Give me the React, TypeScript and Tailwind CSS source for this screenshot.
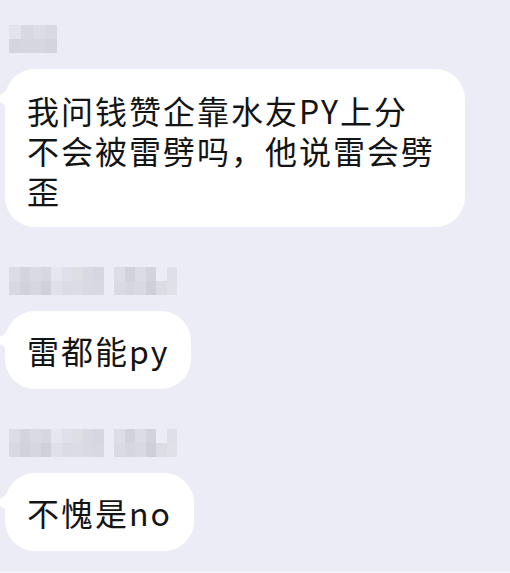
const nameShort = [
  "bg-[#e3e3ec]", "bg-[#d7d9e1]", "bg-[#dcdde4]", "bg-[#d9d9e3]",
  "bg-[#d5d5df]", "bg-[#d5d6df]", "bg-[#d6d6df]", "bg-[#d4d4de]",
];

const nameLongA = [
  "bg-[#dcdde4]", "bg-[#d3d4dd]", "bg-[#dadbe2]", "bg-[#d7d8df]", "bg-[#e6e6ef]", "bg-[#e0e0ea]", "bg-[#dddfe5]", "bg-[#d9d9e3]", "bg-[#d6d6e0]",
  "bg-[#d8d8e1]", "bg-[#d2d2dc]", "bg-[#d5d6df]", "bg-[#cfd0d9]", "bg-[#e0e1e8]", "bg-[#dbdce3]", "bg-[#dcdce5]", "bg-[#d8d9e1]", "bg-[#d7d8e1]",
];

const nameLongB = [
  "bg-[#dddde6]", "bg-[#d1d2db]", "bg-[#dcdce5]", "bg-[#d3d3dd]", "bg-transparent", "bg-[#dfdfe7]",
  "bg-[#dadae3]", "bg-[#d6d6df]", "bg-[#d9d9e2]", "bg-[#cfcfd9]", "bg-[#dcdde4]", "bg-[#e0e1e7]",
];

function ShortName() {
  return (
    <div className="ml-[9px] grid h-[28px] w-[48px] grid-cols-4 grid-rows-2">
      {nameShort.map((c, i) => (
        <div key={i} className={c} />
      ))}
    </div>
  );
}

function LongName() {
  return (
    <div className="ml-[9px] flex h-[28px] gap-[10px]">
      <div className="grid w-[95px] grid-cols-9 grid-rows-2">
        {nameLongA.map((c, i) => (
          <div key={i} className={c} />
        ))}
      </div>
      <div className="grid w-[63px] grid-cols-6 grid-rows-2">
        {nameLongB.map((c, i) => (
          <div key={i} className={c} />
        ))}
      </div>
    </div>
  );
}

function Bubble({ children, wide }: { children: React.ReactNode; wide?: boolean }) {
  return (
    <div className="relative ml-[5px] flex">
      <svg className="absolute left-[-5px] top-[20px]" width="8" height="18" viewBox="0 0 8 18">
        <path d="M7 0 C5 3 2 5 0 6 L0 13 C2 14 5 16 7 18 Z" fill="#ffffff" />
      </svg>
      <div
        className={
          wide
            ? "w-[460px] rounded-[30px] bg-white pb-[17px] pl-[22px] pr-[14px] pt-[21px]"
            : "rounded-[30px] bg-white py-[19px] pl-[22px] pr-[22px]"
        }
      >
        <p className="text-[32px] leading-[40px] tracking-[2px] text-[#141414]">{children}</p>
      </div>
    </div>
  );
}

export default function App() {
  return (
    <div
      className="flex h-[573px] w-[510px] flex-col bg-[#ebecf6] pt-[25px]"
      style={{ fontFamily: '"Noto Sans CJK SC", "Noto Sans", sans-serif' }}
    >
      <ShortName />
      <div className="mt-[16px]">
        <Bubble wide>
          我问钱赞企靠水友PY上分
          <br />
          不会被雷劈吗，他说雷会劈
          <br />
          歪
        </Bubble>
      </div>
      <div className="mt-[40px]">
        <LongName />
      </div>
      <div className="mt-[16px]">
        <Bubble>雷都能py</Bubble>
      </div>
      <div className="mt-[40px]">
        <LongName />
      </div>
      <div className="mt-[16px]">
        <Bubble>不愧是no</Bubble>
      </div>
      <div className="mt-auto h-[2px] bg-[#f3f4f9]" />
    </div>
  );
}
